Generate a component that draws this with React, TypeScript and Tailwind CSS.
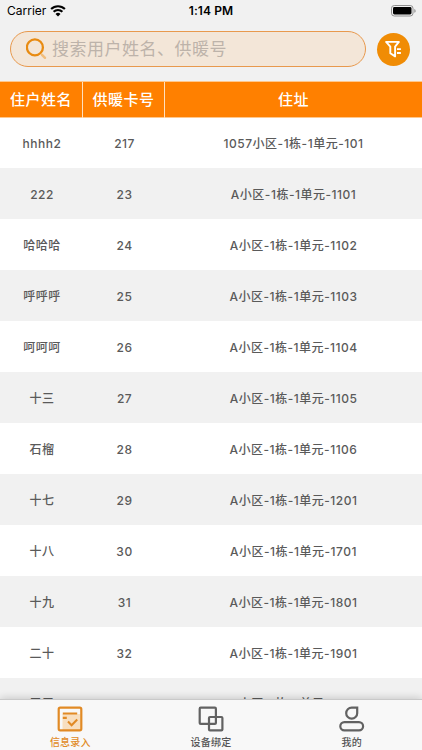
import clsx from "clsx";

const residents = [
  { name: "hhhh2", card: "217", address: "1057小区-1栋-1单元-101" },
  { name: "222", card: "23", address: "A小区-1栋-1单元-1101" },
  { name: "哈哈哈", card: "24", address: "A小区-1栋-1单元-1102" },
  { name: "呼呼呼", card: "25", address: "A小区-1栋-1单元-1103" },
  { name: "呵呵呵", card: "26", address: "A小区-1栋-1单元-1104" },
  { name: "十三", card: "27", address: "A小区-1栋-1单元-1105" },
  { name: "石榴", card: "28", address: "A小区-1栋-1单元-1106" },
  { name: "十七", card: "29", address: "A小区-1栋-1单元-1201" },
  { name: "十八", card: "30", address: "A小区-1栋-1单元-1701" },
  { name: "十九", card: "31", address: "A小区-1栋-1单元-1801" },
  { name: "二十", card: "32", address: "A小区-1栋-1单元-1901" },
  { name: "三三", card: "33", address: "A小区-1栋-1单元-2101" },
];

const WifiIcon = () => (
  <svg width="16" height="12" viewBox="0 0 16 12" fill="none" stroke="#000" strokeWidth="2.1">
    <path d="M1.1 4.1a9.8 9.8 0 0 1 13.8 0" />
    <path d="M3.6 6.8a6.2 6.2 0 0 1 8.8 0" />
    <path d="M8 11.4 5.5 8.9a3.6 3.6 0 0 1 5 0Z" fill="#000" stroke="none" />
  </svg>
);

const BatteryIcon = () => (
  <svg width="26" height="12" viewBox="0 0 26 12" fill="none">
    <rect x="0.5" y="0.5" width="21.5" height="10.5" rx="2.8" stroke="#8f8f8f" />
    <rect x="2" y="2" width="18.5" height="7.5" rx="1.4" fill="#000" />
    <path d="M23.3 4v3.8c.8-.3 1.3-1 1.3-1.9s-.5-1.6-1.3-1.9Z" fill="#8f8f8f" />
  </svg>
);

const SearchIcon = () => (
  <svg width="22" height="22" viewBox="0 0 22 22" fill="none">
    <circle cx="8.9" cy="9.4" r="8" stroke="#e88b12" strokeWidth="2.3" />
    <path d="m16 16.8 3 3" stroke="#f1bd7c" strokeWidth="2.4" strokeLinecap="round" />
  </svg>
);

const FilterIcon = () => (
  <svg width="18" height="18" viewBox="0 0 18 18" fill="none" stroke="#fff" strokeWidth="1.9">
    <path d="M1.1 1.9H13.9L10.1 6.6V16.4L5.3 13.2V6.6Z" strokeLinejoin="round" />
    <path d="M12 9.1h3.9M12 13h3.9" />
  </svg>
);

const EntryIcon = () => (
  <svg width="26" height="26" viewBox="0 0 26 26" fill="none">
    <rect x="5.5" y="8" width="18" height="16" fill="#f8dfc0" />
    <rect x="1.7" y="1.7" width="22.6" height="22.6" rx="1.5" stroke="#e18a25" strokeWidth="2.2" />
    <path d="M5.8 7.5h14.4M5.8 11.9h4M11 15.6l3.6 3.6 5.6-5.6" stroke="#e18a25" strokeWidth="2.1" />
  </svg>
);

const BindIcon = () => (
  <svg width="26" height="26" viewBox="0 0 26 26" fill="none" stroke="#626262" strokeWidth="2.2">
    <rect x="1.7" y="1.7" width="16.2" height="16.2" rx="1" />
    <rect x="11" y="11" width="13.4" height="13.4" rx="1" />
  </svg>
);

const MineIcon = () => (
  <svg width="26" height="26" viewBox="0 0 26 26" fill="none" stroke="#626262" strokeWidth="2.2">
    <path d="M18.2 1.7V7.2a5.5 5.5 0 1 1-5.5-5.5Z" />
    <rect x="1.3" y="16.2" width="22.8" height="8.2" rx="4.1" />
  </svg>
);

const tabs = [
  { label: "信息录入", icon: EntryIcon, active: true },
  { label: "设备绑定", icon: BindIcon, active: false },
  { label: "我的", icon: MineIcon, active: false },
];

const App = () => {
  return (
    <div className="flex h-[750px] w-[422px] flex-col overflow-hidden bg-[#f1f1f1] font-[Inter,'Noto_Sans_CJK_SC',sans-serif]">
      <header className="h-[81px] shrink-0">
        <div className="grid h-[22px] grid-cols-3 items-center text-[12px] text-black">
          <div className="flex items-center gap-[4px] pl-[7px]">
            <span>Carrier</span>
            <WifiIcon />
          </div>
          <span className="text-center font-semibold tracking-[0.1px]">1:14 PM</span>
          <div className="flex justify-end pr-[5px]">
            <BatteryIcon />
          </div>
        </div>
        <div className="flex items-center gap-[11px] pt-[9px] pl-[10px]">
          <div className="flex h-[36px] w-[356px] items-center gap-[4px] rounded-full border border-[#e8994d] bg-[#f3e6d8] pl-[15px]">
            <SearchIcon />
            <span className="text-[17px] leading-[34px] tracking-[0.5px] text-[#bdb3aa]">
              搜索用户姓名、供暖号
            </span>
          </div>
          <button className="flex size-[33px] items-center justify-center rounded-full bg-[#f08c05]">
            <FilterIcon />
          </button>
        </div>
      </header>

      <main className="min-h-0 flex-1 overflow-hidden">
        <div className="grid h-[37px] grid-cols-[82px_83px_257px] border-y border-[#ffc78c] bg-[#ff8000] text-center text-[15px] leading-[36px] font-medium tracking-[0.5px] text-white">
          <span>住户姓名</span>
          <span className="border-x border-[#ffe0bf]">供暖卡号</span>
          <span>住址</span>
        </div>
        {residents.map((item, i) => (
          <div
            key={item.card}
            className={clsx(
              "grid grid-cols-[84px_81px_257px] text-center text-[12px] leading-[49px] font-medium tracking-[0.5px] text-[#5a5a5a]",
              i === 0 && "h-[50px] pt-px",
              i > 0 && i < residents.length - 1 && "h-[51px] pt-[2px]",
              i === residents.length - 1 && "h-[51px] pt-px",
              i % 2 === 0 ? "bg-white" : "bg-[#f1f1f1]"
            )}
          >
            <span>{item.name}</span>
            <span>{item.card}</span>
            <span>{item.address}</span>
          </div>
        ))}
      </main>

      <nav className="relative grid h-[51px] shrink-0 grid-cols-3 border-t border-[#c9c9c9] bg-[#f8f8f8] shadow-[0_-1px_8px_rgba(0,0,0,0.18)]">
        {tabs.map(({ label, icon: Icon, active }) => (
          <div
            key={label}
            className={clsx(
              "flex flex-col items-center pt-[6px] text-[10px] leading-[20px] font-medium tracking-[0.2px]",
              active ? "text-[#e18a25]" : "text-[#555]"
            )}
          >
            <Icon />
            <span>{label}</span>
          </div>
        ))}
      </nav>
    </div>
  );
};

export default App;
